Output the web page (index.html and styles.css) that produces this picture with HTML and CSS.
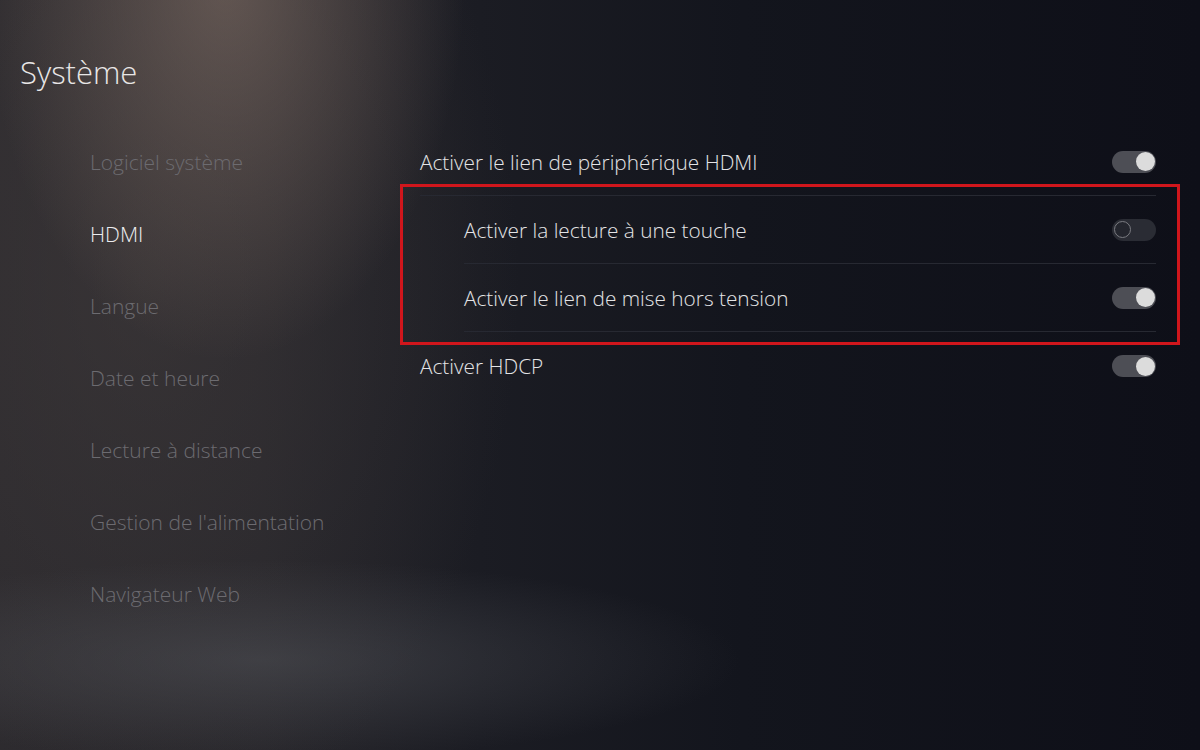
FILE: index.html
```html
<!DOCTYPE html>
<html lang="fr">
<head>
    <meta charset="UTF-8">
    <title>Système - HDMI</title>
    <link rel="stylesheet" href="styles.css">
</head>
<body>
    <!-- Title -->
    <header class="page-header">
        <h1>Système</h1>
    </header>

    <div class="page">
        <!-- Left menu -->
        <nav class="side-menu">
            <a href="#">Logiciel système</a>
            <a href="#" class="active">HDMI</a>
            <a href="#">Langue</a>
            <a href="#">Date et heure</a>
            <a href="#">Lecture à distance</a>
            <a href="#">Gestion de l'alimentation</a>
            <a href="#">Navigateur Web</a>
        </nav>

        <!-- Settings list -->
        <main class="settings">
            <div class="row">
                <span>Activer le lien de périphérique HDMI</span>
                <span class="toggle on"></span>
            </div>
            <div class="group">
                <div class="row sub">
                    <span>Activer la lecture à une touche</span>
                    <span class="toggle"></span>
                </div>
                <div class="row sub">
                    <span>Activer le lien de mise hors tension</span>
                    <span class="toggle on"></span>
                </div>
                <div class="highlight"></div>
            </div>
            <div class="row last">
                <span>Activer HDCP</span>
                <span class="toggle on"></span>
            </div>
        </main>
    </div>
</body>
</html>
```

FILE: styles.css
```css
html, body {
    height: 100%;
}
body {
    margin: 0;
    font-family: "Open Sans", "Noto Sans", sans-serif;
    font-weight: 300;
    color: #e4e4e6;
    overflow: hidden;
    background:
        radial-gradient(ellipse 240px 380px at 225px -20px, rgba(150, 128, 116, 0.5), rgba(150, 128, 116, 0) 100%),
        radial-gradient(ellipse 480px 100px at 260px 660px, rgba(88, 90, 96, 0.45), rgba(88, 90, 96, 0) 100%),
        radial-gradient(ellipse 380px 560px at 140px 280px, rgba(66, 60, 60, 0.55), rgba(66, 60, 60, 0) 100%),
        linear-gradient(90deg, #2c2a2e 0%, #27262b 22%, #1b1c23 40%, #13151d 62%, #0e0f18 100%);
}

.page-header {
    padding: 51px 0 0 20px;
    height: 77px;
    box-sizing: border-box;
}
.page-header h1 {
    margin: 0;
    font-size: 31px;
    font-weight: 300;
    line-height: 42px;
    color: #e8e6e6;
}

.page {
    display: flex;
}

/* left menu */
.side-menu {
    width: 420px;
    padding: 49px 0 0 90px;
    box-sizing: border-box;
    display: flex;
    flex-direction: column;
}
.side-menu a {
    height: 72px;
    line-height: 72px;
    font-size: 21px;
    color: #6c6b70;
    text-decoration: none;
    white-space: nowrap;
}
.side-menu a.active {
    color: #ececee;
}

/* settings list */
.settings {
    width: 736px;
    padding-top: 51px;
}
.row {
    height: 68px;
    display: flex;
    align-items: center;
    justify-content: space-between;
    font-size: 20.8px;
    border-bottom: 1px solid #272932;
    box-sizing: border-box;
}
.row.sub {
    margin-left: 44px;
}
.row.last {
    border-bottom: none;
}

.group {
    position: relative;
}
/* red annotation box */
.highlight {
    position: absolute;
    top: -12px;
    left: -20px;
    right: -24px;
    bottom: -13px;
    border: 3px solid #d0161c;
}

.toggle {
    width: 44px;
    height: 22px;
    border-radius: 11px;
    background: #2a2c34;
    position: relative;
    flex-shrink: 0;
}
.toggle::after {
    content: "";
    position: absolute;
    top: 2px;
    left: 2px;
    width: 15px;
    height: 15px;
    border-radius: 50%;
    border: 1.5px solid #7b7c82;
    background: #24262e;
}
.toggle.on {
    background: #4d4e55;
}
.toggle.on::after {
    left: 24px;
    top: 1.5px;
    width: 19px;
    height: 19px;
    border: none;
    background: #dcdcdc;
}
```
